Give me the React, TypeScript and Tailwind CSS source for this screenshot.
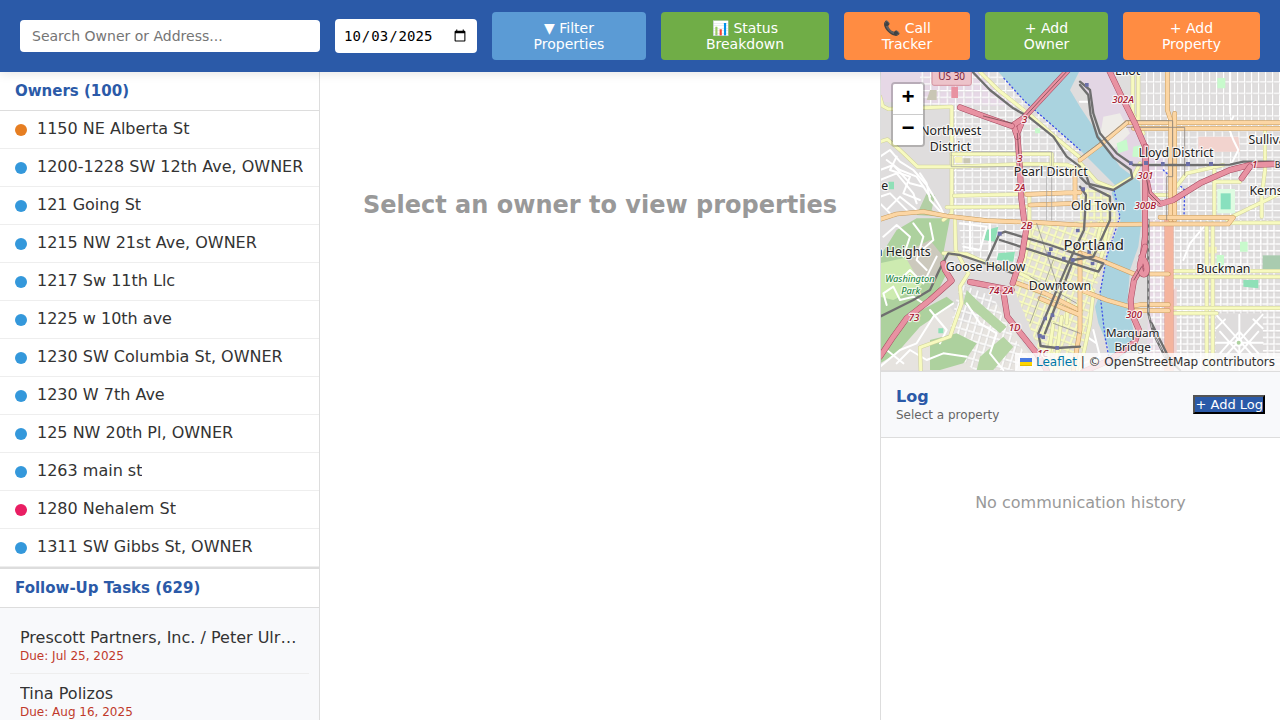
import React from "react";
import clsx from "clsx";

type Owner = { name: string; dot: string };

const BLUE = "bg-[#3498db]";

const owners: Owner[] = [
  { name: "1150 NE Alberta St", dot: "bg-[#e67e22]" },
  { name: "1200-1228 SW 12th Ave, OWNER", dot: BLUE },
  { name: "121 Going St", dot: BLUE },
  { name: "1215 NW 21st Ave, OWNER", dot: BLUE },
  { name: "1217 Sw 11th Llc", dot: BLUE },
  { name: "1225 w 10th ave", dot: BLUE },
  { name: "1230 SW Columbia St, OWNER", dot: BLUE },
  { name: "1230 W 7th Ave", dot: BLUE },
  { name: "125 NW 20th Pl, OWNER", dot: BLUE },
  { name: "1263 main st", dot: BLUE },
  { name: "1280 Nehalem St", dot: "bg-[#e91e63]" },
  { name: "1311 SW Gibbs St, OWNER", dot: BLUE },
];

const tasks = [
  { name: "Prescott Partners, Inc. / Peter Ulrich", due: "Due: Jul 25, 2025" },
  { name: "Tina Polizos", due: "Due: Aug 16, 2025" },
];

const actions = [
  { label: "▼ Filter Properties", style: "basis-[154px] bg-[#5b9bd5]" },
  { label: "📊 Status Breakdown", style: "basis-[168px] bg-[#70ad47]" },
  { label: "📞 Call Tracker", style: "basis-[126px] bg-[#ff8c42]" },
  { label: "+ Add Owner", style: "basis-[123px] bg-[#70ad47]" },
  { label: "+ Add Property", style: "basis-[137px] bg-[#ff8c42]" },
];

function Road({ d, fill, w, edge }: { d: string; fill: string; w: number; edge: string }) {
  return (
    <>
      <path d={d} stroke={edge} strokeWidth={w + 3} />
      <path d={d} stroke={fill} strokeWidth={w} />
    </>
  );
}

const places: [string, number, number, number][] = [
  ["Northwest", 212, 196, 37],
  ["District", 211, 243, 37],
  ["Pearl District", 512, 317, 37],
  ["Old Town", 654, 421, 37],
  ["Lloyd District", 888, 261, 37],
  ["Eliot", 743, 16, 37],
  ["Sullivan's", 1185, 223, 37],
  ["Kerns", 1158, 374, 37],
  ["Portland", 641, 541, 45],
  ["Goose Hollow", 317, 602, 37],
  ["Downtown", 540, 661, 37],
  ["Buckman", 1030, 610, 37],
  ["Marquam", 758, 802, 35],
  ["Bridge", 758, 842, 35],
];

const exits: [string, number, number][] = [
  ["302A", 729, 100],
  ["301", 796, 327],
  ["300B", 796, 418],
  ["300", 762, 744],
  ["3", 434, 160],
  ["3", 420, 277],
  ["2A", 420, 364],
  ["2B", 440, 476],
  ["2A", 384, 673],
  ["74", 342, 671],
  ["73", 102, 752],
  ["1D", 404, 782],
  ["1C", 488, 860],
  ["1", 1124, 293],
];

const yellowRoads = [
  "M0 80 L8 108 L25 117 L215 110 V430 L190 450",
  "M0 215 L22 208 L60 240 L112 290 L215 290 L440 282 L560 284 L600 300",
  "M300 6 L355 60 L450 135 L530 205 L600 262",
  "M215 252 H515 V284",
  "M222 377 L440 372 M200 412 L445 410",
  "M448 375 V500 L425 610",
  "M225 450 L227 540 L265 610 L240 650 L245 700 L210 800 L120 832 L122 900",
  "M190 550 L260 552 L320 580 L400 600 L480 640",
  "M758 6 V130 L790 190 M775 6 V150",
  "M600 278 L650 335 L700 355 L760 320 L780 280",
  "M800 375 H870 L920 310 L1030 285",
  "M1003 300 V440 M1155 170 V300 L1145 380 V440 M1003 335 H1080 M1040 448 L1200 370",
  "M980 460 V900 M998 460 V900",
  "M870 603 H1200 M870 620 H1200 M870 714 H1200 M870 730 H1010 M1050 458 H1200",
  "M685 455 L670 540 L645 620 M665 455 L640 560",
  "M625 640 L640 670 L630 760 L600 900 M520 760 L500 900 M545 740 L525 900 M565 690 L560 760",
];

const primaryRoads = [
  "M440 373 L600 367 M450 405 L585 400 V300",
  "M740 158 H1200 M760 175 H1200",
  "M600 270 L660 225 L740 158",
  "M862 6 V120 L872 150 V450",
  "M884 130 V450",
  "M0 448 L50 432 L130 425 L200 438 L320 452 L480 458 L600 465 L820 462 H1045 L1060 443 L840 442",
  "M600 548 L680 578 L762 612 H865",
  "M600 659 L680 690 L750 710 L780 704 H865 M750 722 H865",
  "M400 635 L500 672 L600 722",
  "M480 685 L600 735 M600 550 V780 L580 900",
];

const motorways = [
  "M568 -4 L430 145 L412 190 L420 300 L424 385 L432 448",
  "M430 145 L400 165 L412 200",
  "M395 168 L310 138 L240 112",
  "M0 860 L40 800 L80 745 L150 690 L215 632 L195 600 L190 580",
  "M270 636 L395 660 M370 665 L382 740 L430 800 L470 850 L500 900",
  "M440 470 L425 560 L398 640",
  "M685 -4 L720 70 L765 160 L795 230 L800 330 L808 370 L840 402 L880 390 L960 340 L1050 300 L1110 285 L1200 282",
  "M797 230 L795 400 L795 500 L785 590 L762 630 L752 690 L755 730 L777 780 L765 815 L690 870 L610 905",
  "M785 560 C810 590 800 625 785 610 C770 590 790 560 795 530",
  "M1110 290 L1085 325",
];

const railways = [
  "M278 6 L330 60 L400 115 L445 140 L520 200 L560 260 L600 290",
  "M600 35 L630 60 L640 130 L660 190 L710 250 L760 285 H950 L1050 284 L1090 275 H1200",
  "M600 45 L625 75 L632 135 L652 200 L700 262 L752 300 L757 325 L700 360 L620 340 L600 320",
  "M320 575 L358 492 L375 485 L510 525 L670 580 L655 605 L360 510",
  "M600 350 L618 375 L612 480 L560 590 L475 790 L482 828 L530 834 L600 830",
  "M620 320 L630 350 L690 380 L690 450 L640 560 L580 570 L495 790",
  "M0 740 L40 720 L100 690 L150 660 L178 600 L205 550 L240 555 L330 585 L400 610",
  "M805 450 V730 L820 790 L855 860 L900 900 M815 760 L870 870",
];

function StreetMap() {
  return (
    <svg
      className="block h-full w-full"
      viewBox="3 6 1197 897"
      preserveAspectRatio="xMidYMid slice"
      role="img"
      aria-label="Street map of Portland"
      fill="none"
      strokeLinejoin="round"
      strokeLinecap="round"
    >
      <defs>
        <pattern id="nw" width="25" height="20" patternUnits="userSpaceOnUse">
          <path d="M0 2H25M2 0V20" stroke="#fff" strokeWidth="5" />
          <path d="M0 5H25M5 0V20" stroke="#c9c7c7" strokeWidth="1" />
        </pattern>
        <pattern id="ne" width="21" height="34" patternUnits="userSpaceOnUse">
          <path d="M0 2H21M2 0V34" stroke="#fff" strokeWidth="5" />
          <path d="M0 5H21M5 0V34" stroke="#c4c2c2" strokeWidth="1" />
        </pattern>
        <pattern id="se" width="20" height="20" patternUnits="userSpaceOnUse">
          <path d="M0 2H20M2 0V20" stroke="#fff" strokeWidth="6" />
          <path d="M0 6H20M6 0V20" stroke="#c4c2c2" strokeWidth="1" />
        </pattern>
        <pattern id="dt" width="22" height="22" patternUnits="userSpaceOnUse" patternTransform="rotate(20)">
          <path d="M0 3H22M3 0V22" stroke="#f7fabf" strokeWidth="7" />
          <path d="M0 7H22M7 0V22" stroke="#c8c8a8" strokeWidth="1" />
        </pattern>
        <pattern id="sw" width="22" height="26" patternUnits="userSpaceOnUse" patternTransform="rotate(16)">
          <path d="M0 3H22M3 0V26" stroke="#fff" strokeWidth="5" />
          <path d="M0 6H22M6 0V26" stroke="#c4c2c2" strokeWidth="1" />
        </pattern>
        <pattern id="ot" width="20" height="20" patternUnits="userSpaceOnUse">
          <path d="M0 3H20M3 0V20" stroke="#f7fabf" strokeWidth="7" />
          <path d="M0 7H20M7 0V20" stroke="#c8c8a8" strokeWidth="1" />
        </pattern>
      </defs>

      <path d="M0 0H1200V910H0Z" fill="#dfdddd" />
      <path d="M0 0H300L420 110L215 105L0 95Z" fill="#e6d8e6" />
      <path d="M590 0H700L790 230V330L700 260L640 120Z" fill="#e3d6e4" />
      <path d="M670 140L720 130L750 190L700 240L660 200Z" fill="#eeece8" />
      <path d="M800 260H860V370L810 360Z" fill="#e4d5e6" />
      <path d="M810 450H870V900H800Z" fill="#e8dbe6" />
      <path d="M480 720L600 760V900H470Z" fill="#f0dcd8" />
      <path d="M250 760L350 700L480 900H0V870L60 780L200 700Z" fill="#e6e3df" />

      <path d="M120 6H420L600 240V450H215V110H120Z" fill="url(#nw)" />
      <path d="M780 6H1200V180H780Z" fill="url(#ne)" />
      <path d="M800 180H1200V450H800Z" fill="url(#nw)" />
      <path d="M810 450H1200V730H810Z" fill="url(#se)" />
      <path d="M810 730H1008V900H810ZM1148 730H1200V900H1148Z" fill="url(#se)" />
      <path d="M235 450H440L400 600L250 560Z" fill="url(#nw)" />
      <path d="M240 640L340 680L400 800L470 900H280L200 820Z" fill="url(#sw)" />
      <path d="M450 460L710 450L640 680L600 900H500L400 650Z" fill="#e4e0d8" />
      <path d="M450 460L710 450L640 680L600 900H500L400 650Z" fill="url(#dt)" />
      <path d="M600 350L690 370L715 450H600Z" fill="url(#ot)" />

      <path d="M50 480L110 445H210L190 550L205 600L165 680L60 770L0 820V560Z" fill="#add19e" />
      <path d="M0 580L90 560L150 610L120 650L40 690L0 680Z" fill="#cdebb0" />
      <path d="M0 820L50 760L200 680L225 700L120 770L50 850L0 880Z" fill="#add19e" />
      <path d="M70 550L150 510L190 560L160 640L110 620Z" fill="#ccc9bd" />
      <path d="M150 810L230 790L290 820L250 880L180 900H150Z" fill="#add19e" />
      <path d="M300 860L370 800L400 830L340 900H290ZM260 660L290 690L380 770L360 790L290 730L250 700Z" fill="#b6d5a5" />
      <path d="M110 435L140 370L165 375L155 420L190 440Z" fill="#b3cfa5" />
      <path d="M1148 556H1200V600H1148Z" fill="#a9cbaf" />
      <path d="M1010 555H1032V600H1010ZM1080 515H1103V545H1080ZM1012 24H1036V55H1012ZM710 220L740 208L745 240L715 250ZM760 230L785 225V262L757 260ZM465 175H480V190H465Z" fill="#c8facc" />
      <path d="M320 480L355 470L345 515L312 510ZM355 550L405 545L400 575L350 570ZM1090 630H1135V655L1090 650ZM25 335H42V358H25ZM175 775H190V790H175Z" fill="#8fe0b7" />
      <path d="M1012 357H1065V430H1012Z" fill="#dffce2" />
      <path d="M1022 370H1052V418H1022Z" fill="#88e0be" />
      <path d="M955 200H1075L1080 245H955Z" fill="#f2d3ce" />
      <path d="M870 900V670L890 650V900Z" fill="#eed5d5" />
      <path d="M250 265H270V280H250ZM150 60H170V90H140Z" fill="#c9c6b4" />
      <path d="M225 260H247V278H225ZM985 530H1010V550H985Z" fill="#f6f4b8" />

      <g stroke="#fff" strokeWidth="6">
        <path d="M0 260L30 240L60 275L100 300L140 345L180 410L190 430" />
        <path d="M0 300L40 285L90 340L130 350M0 330L50 310L100 370L110 400M0 380L30 370L60 400L90 430M20 420L60 380L110 420M0 400L40 440" />
        <path d="M20 270L60 300L110 320L150 380M50 260L30 300L90 320L70 370L120 390" />
        <path d="M120 310L140 340L150 390L195 440" />
        <path d="M10 500L50 465L90 500L70 560M100 460L130 500L110 570L140 600M150 460L160 510L120 545M170 560L130 640L90 600L60 630" />
        <path d="M20 705L10 670L40 650L60 690L100 680L130 700" />
        <path d="M240 460L320 470L300 540L250 530M270 455V540M330 460V550" />
        <path d="M0 890L60 840L110 820L160 740L220 700M50 880L90 840L140 870L190 850L260 860M150 720L200 780L180 820M20 840L70 880M260 700L300 760L350 790L330 850L370 900" />
        <path d="M1050 130V6M1060 140L1045 170L1060 210L1075 240L1055 280" />
        <path d="M980 460L930 520L910 570" />
        <path d="M600 95H630M640 780L660 860L610 880M620 800L650 820" />
      </g>

      <path d="M1008 734H1148V900H1008Z" fill="#dedcdc" />
      <g stroke="#fff" strokeWidth="6">
        <path d="M1008 734L1148 890M1148 734L1008 890M1078 734V900M1008 818H1148M1008 775L1035 748M1148 775L1120 748M1020 850L1078 785L1135 850M1020 785L1078 850L1135 785" />
        <circle cx="1076" cy="818" r="9" fill="#add19e" />
      </g>

      <path
        d="M350 0L440 100L600 240L660 300L705 345L695 370L722 450L715 470L680 560L660 670L645 710L655 760L685 830L690 905L720 880L765 800L742 700L750 600L775 530L785 450L780 335L720 290L680 230L600 110L570 60L600 0Z"
        fill="#aad3df"
      />
      <path
        d="M372 25L435 95L510 160L600 240M700 350L720 440L680 560L660 670L675 800L690 880M850 300L914 360L912 440"
        stroke="#3d50e8"
        strokeWidth="4"
        strokeDasharray="3 9"
      />

      {yellowRoads.map((d) => (
        <Road key={d} d={d} fill="#f7fabf" edge="#cfd09b" w={9} />
      ))}
      <path d="M862 450V900M872 450V900" stroke="#d98d76" strokeWidth="17" />
      <path d="M862 450V900M872 450V900" stroke="#f4b49e" strokeWidth="14" />
      {primaryRoads.map((d) => (
        <Road key={d} d={d} fill="#fcd6a4" edge="#c79a5c" w={11} />
      ))}
      <path d="M600 263L660 218L740 152H878V320H860V450M740 172H914V316" stroke="#8d8580" strokeWidth="2.5" />
      <path d="M215 245H515V290H215ZM500 290V450M515 290V450" stroke="#9a9a9a" strokeWidth="2" />
      <path d="M470 460L530 640L600 660M520 760L600 790M450 620L590 700M520 570L450 760" stroke="#858585" strokeWidth="2" />
      {railways.map((d) => (
        <path key={d} d={d} stroke="#6f6f6f" strokeWidth="7" />
      ))}
      <path d="M805 450V730L820 790L855 860" stroke="#c2c2c2" strokeWidth="3" strokeDasharray="12 12" />
      <path d="M200 60L230 15V6" stroke="#e892a2" strokeWidth="0" />
      <path d="M224 50V92" stroke="#e892a2" strokeWidth="20" strokeDasharray="34 8" strokeLinecap="butt" />
      {motorways.map((d) => (
        <Road key={d} d={d} fill="#e892a2" edge="#a4485f" w={15} />
      ))}
      <path d="M412 190L420 300M568 -4L430 145M395 160L310 138M800 330L808 370L840 402M785 590L762 630" stroke="#5d3a43" strokeWidth="2" />
      <g fill="#6c70a8">
        <path d="M747 274h11v11h-11zM792 273h12v12h-12zM843 276h11v11h-11zM918 276h12v12h-12zM987 276h12v12h-12zM615 39h11v11h-11zM353 485h12v12h-12zM507 532h11v11h-11zM546 560h11v11h-11zM573 564h11v11h-11zM502 545h11v11h-11zM490 740h11v11h-11zM512 730h11v11h-11zM484 796h11v11h-11zM526 828h11v11h-11zM622 540h11v11h-11zM632 575h11v11h-11zM604 352h11v11h-11zM588 476h11v11h-11zM474 792h11v11h-11z" />
      </g>

      <rect x="156" y="-8" width="118" height="54" rx="6" fill="#edc3ca" stroke="#d4909d" strokeWidth="3" />
      <g
        fontFamily='"Noto Sans", sans-serif'
        textAnchor="middle"
        paintOrder="stroke"
        stroke="#ffffff"
        strokeOpacity="0.75"
        strokeWidth="7"
      >
        <text x="215" y="31" fontSize="30" fill="#7c1f3c" strokeWidth="0">
          US 30
        </text>
        {exits.map(([label, x, y]) => (
          <text key={`${label}-${x}-${y}`} x={x} y={y} fontSize="29" fontStyle="italic" fontWeight="500" fill="#a3122c">
            {label}
          </text>
        ))}
        <g fill="#0d7d35" fontStyle="italic" fontSize="28">
          <text x="90" y="637">Washington</text>
          <text x="92" y="671">Park</text>
        </g>
        <g fill="#222">
          {places.map(([label, x, y, size]) => (
            <text key={`${label}-${y}`} x={x} y={y} fontSize={size}>
              {label}
            </text>
          ))}
          <text x="152" y="559" fontSize="37" textAnchor="end">
            Northwest Hillside Southern Heights
          </text>
          <text x="4" y="360" fontSize="37" textAnchor="start">
            e
          </text>
          <text x="1184" y="293" fontSize="26" textAnchor="start">
            B
          </text>
        </g>
      </g>
    </svg>
  );
}

function MapPanel() {
  return (
    <section aria-label="Map" className="relative z-20 h-[300px] shrink-0 overflow-hidden border-b border-[#ddd]">
      <StreetMap />
      <div className="absolute top-[10px] left-[10px] flex flex-col overflow-hidden rounded border-2 border-black/20 bg-clip-padding font-['Liberation_Mono',monospace] text-[22px] leading-[30px] font-bold text-black">
        <button type="button" aria-label="Zoom in" className="h-[31px] w-[30px] border-b border-[#ccc] bg-white">
          +
        </button>
        <button type="button" aria-label="Zoom out" className="h-[30px] w-[30px] bg-white">
          −
        </button>
      </div>
      <div className="absolute right-0 bottom-0 flex items-center bg-white/80 px-[5px] text-[12px] leading-[18px] text-[#333]">
        <a href="#leaflet" className="flex items-center gap-1 text-[#0078a8]">
          <svg width="12" height="8" viewBox="0 0 12 8" aria-hidden="true">
            <path fill="#4c7be1" d="M0 0h12v4H0z" />
            <path fill="#ffd500" d="M0 4h12v3H0z" />
            <path fill="#e0bc00" d="M0 7h12v1H0z" />
          </svg>
          Leaflet
        </a>
        <span className="whitespace-pre"> | © OpenStreetMap contributors</span>
      </div>
    </section>
  );
}

function SectionTitle({ children }: { children: React.ReactNode }) {
  return (
    <h2 className="shrink-0 border-b border-[#ddd] bg-white px-[15px] py-[10px] text-[15px] leading-[18px] font-bold text-[#2b5aa8]">
      {children}
    </h2>
  );
}

export default function App() {
  return (
    <div className="flex h-screen flex-col overflow-hidden bg-white font-['DejaVu_Sans',sans-serif] text-[#333]">
      <header className="relative z-10 flex shrink-0 items-center gap-[15px] bg-[#2b5aa8] px-5 py-3 shadow-[0_2px_10px_rgba(0,0,0,0.1)]">
        <input
          type="text"
          aria-label="Search owners"
          placeholder="Search Owner or Address..."
          className="h-8 w-[300px] shrink-0 rounded bg-white px-3 text-[14px] text-black placeholder:text-[#757575]"
        />
        <input
          type="date"
          aria-label="Date"
          defaultValue="2025-10-03"
          className="h-[34px] w-[142px] shrink-0 rounded bg-white px-2 font-['DejaVu_Sans_Mono',monospace] text-[14px] text-black"
        />
        {actions.map((a) => (
          <button
            key={a.label}
            type="button"
            className={clsx("grow rounded px-6 py-2 text-[14px] leading-4 text-white", a.style)}
          >
            {a.label}
          </button>
        ))}
      </header>

      <div className="flex min-h-0 flex-1">
        <aside className="flex w-80 shrink-0 flex-col border-r border-[#ddd]">
          <SectionTitle>Owners (100)</SectionTitle>
          <ul className="shrink-0">
            {owners.map((o) => (
              <li key={o.name} className="flex items-center gap-[10px] border-b border-[#eee] px-[15px] pt-2 pb-[10px]">
                <span className={clsx("mt-[2px] size-3 shrink-0 rounded-full", o.dot)} />
                <span className="truncate text-[16px] leading-[19px]">{o.name}</span>
              </li>
            ))}
          </ul>
          <div className="flex min-h-0 flex-1 flex-col border-t-2 border-[#ddd]">
            <SectionTitle>Follow-Up Tasks (629)</SectionTitle>
            <ul className="min-h-0 flex-1 overflow-hidden bg-[#f8f9fb] p-[10px]">
              {tasks.map((t) => (
                <li key={t.name} className="border-b border-[#eee] p-[10px]">
                  <p className="truncate text-[16px] leading-[19px]">{t.name}</p>
                  <p className="mt-[2px] text-[12px] leading-[14px] text-[#c0392b]">{t.due}</p>
                </li>
              ))}
            </ul>
          </div>
        </aside>

        <main className="min-w-0 flex-1 px-5 pt-[119px] text-center">
          <h1 className="text-[24px] leading-7 font-bold text-[#999]">Select an owner to view properties</h1>
        </main>

        <aside className="flex w-[400px] shrink-0 flex-col border-l border-[#ddd]">
          <MapPanel />
          <div className="flex shrink-0 items-center justify-between border-b border-[#ddd] bg-[#f8f9fb] p-[15px]">
            <div>
              <h2 className="text-[16px] leading-[19px] font-bold text-[#2b5aa8]">Log</h2>
              <p className="mt-[2px] text-[12px] leading-[14px] text-[#666]">Select a property</p>
            </div>
            <button
              type="button"
              className="border-2 border-black bg-[#2b5aa8] text-[13px] leading-[15px] text-white [border-style:outset]"
            >
              + Add Log
            </button>
          </div>
          <p className="pt-[55px] text-center text-[16px] leading-[19px] text-[#999]">No communication history</p>
        </aside>
      </div>
    </div>
  );
}
